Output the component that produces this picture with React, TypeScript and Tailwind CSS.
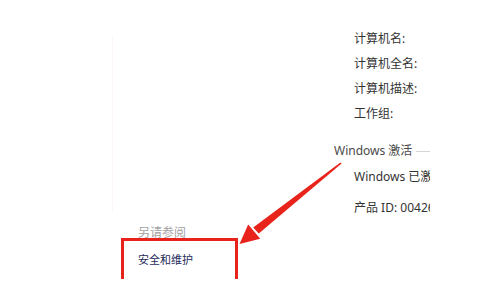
import React from "react";

const font = { fontFamily: '"Noto Sans", "Noto Sans CJK SC", sans-serif' };

// system info labels on the right, all cut off at the panel edge
const labels = ["计算机名:", "计算机全名:", "计算机描述:", "工作组:"];

export default function App() {
  return (
    <div
      className="relative flex h-[292px] w-[503px] overflow-hidden bg-white text-[12px] leading-[16px]"
      style={font}
    >
      {/* Left: faint divider and "see also" links */}
      <div className="flex w-[334px] shrink-0 flex-col pl-[112px]">
        <div className="mt-[35px] h-[178px] w-px bg-[#fdf6f8]" />
        <div className="ml-[26px] mt-[12px] whitespace-nowrap text-[#a2a2a2]">另请参阅</div>
        <div className="ml-[26px] mt-[11px] whitespace-nowrap text-[11px] text-[#1f2b5c]">安全和维护</div>
      </div>

      {/* Right: computer name / activation section, clipped */}
      <div className="flex w-[96px] shrink-0 flex-col overflow-hidden whitespace-nowrap text-[#333333]">
        <div className="mt-[31px] flex flex-col gap-[9px] pl-[20px]">
          {labels.map((l) => (
            <div key={l}>{l}</div>
          ))}
        </div>
        <div className="mt-[21px] flex items-center text-[#4a4a4a]">
          <span>Windows 激活</span>
          <div className="ml-[4px] h-px w-[40px] shrink-0 bg-[#d4d4d4]" />
        </div>
        <div className="mt-[10px] pl-[20px]">Windows 已激活</div>
        <div className="mt-[15px] pl-[20px]">产品 ID: 00426</div>
      </div>

      {/* Annotation: red highlight box */}
      <div className="pointer-events-none absolute left-[121px] top-[238px] h-[41px] w-[117px] border-[3px] border-b-0 border-[#e8231b]" />

      {/* Annotation: red arrow */}
      <svg
        className="pointer-events-none absolute inset-0"
        width="503"
        height="292"
        viewBox="0 0 503 292"
      >
        <polygon
          points="341.6,163.6 340.4,162.4 253.2,227.5 258.8,233.5"
          fill="#e8231b"
        />
        <polygon points="239.5,244 248.2,224.5 260.2,238.8" fill="#e8231b" />
      </svg>
    </div>
  );
}
